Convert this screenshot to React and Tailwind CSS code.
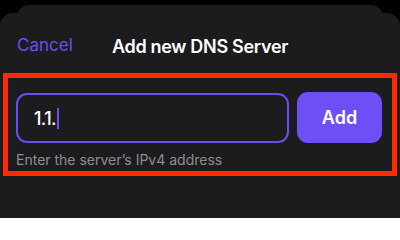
export default function App() {
  return (
    <div className="w-[400px] h-[218px] bg-black overflow-hidden flex flex-col font-['Inter',sans-serif]">
      <div className="mx-[17px] mt-[5px] h-[20px] shrink-0 rounded-t-[12px] bg-[#1c1c1e]" />
      <div className="-mt-[12px] relative flex-1 flex flex-col rounded-t-[13px] bg-[#1c1c1e]">
        <div className="h-[60px] pt-[6px] shrink-0 grid grid-cols-[1fr_auto_1fr] items-center">
          <div className="pl-[17px] text-[17px] text-[#6c4ef2]">Cancel</div>
          <div className="text-[18px] font-semibold text-white tracking-[-0.3px]">Add new DNS Server</div>
          <div />
        </div>
        <div className="mx-[3px] border-[5px] border-[#ff2a00] pl-[8px] pr-[10px] pt-[14px] pb-[3px]">
          <div className="flex gap-[8px] h-[51px]">
            <div className="w-[273px] h-[50px] mt-[1px] rounded-[11px] border-2 border-[#6a4cf0] flex items-center pl-[16px]">
              <span className="text-[18px] font-medium text-white tracking-[-0.6px]">1.1.</span>
              <span className="ml-[1px] w-[2px] h-[21px] bg-[#6a4cf0]" />
            </div>
            <button className="flex-1 rounded-[11px] bg-[#6e4ff6] text-white text-[18px] font-semibold flex items-center justify-center">
              Add
            </button>
          </div>
          <div className="mt-[8px] text-[14px] leading-[17px] text-[#8e8e93]">Enter the server’s IPv4 address</div>
        </div>
      </div>
    </div>
  );
}
